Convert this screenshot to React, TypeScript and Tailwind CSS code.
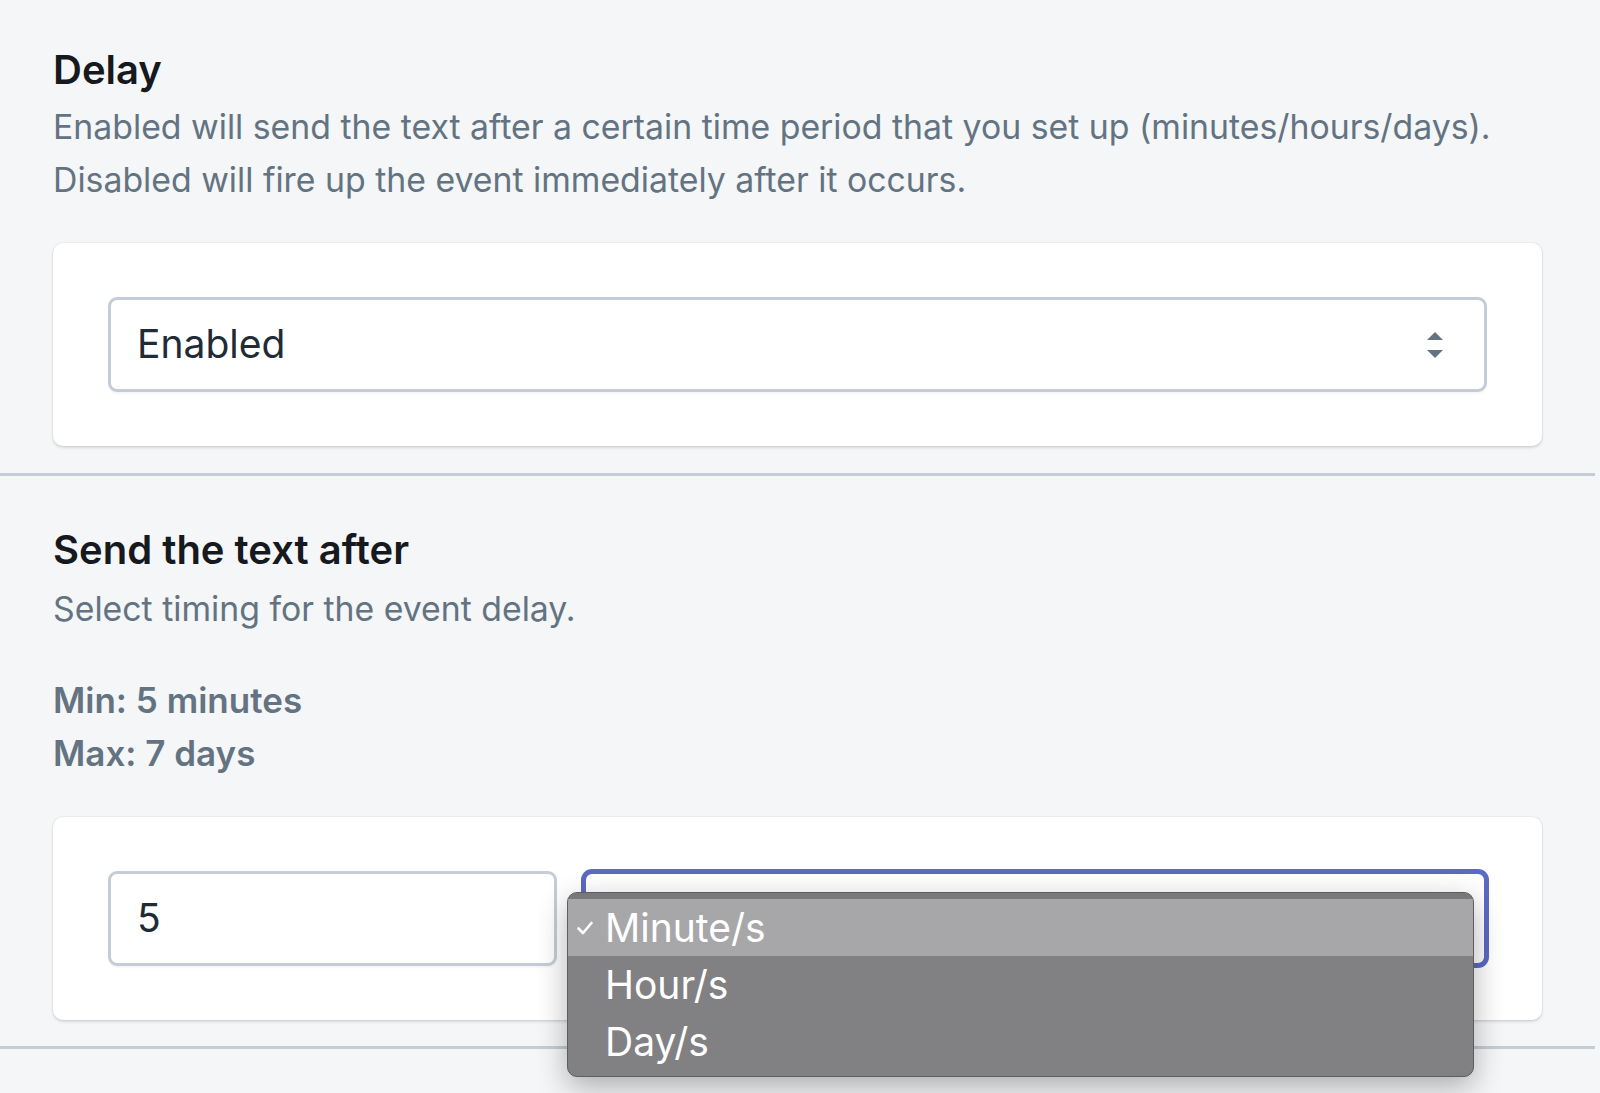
import { useState } from 'react'

const units = ['Minute/s', 'Hour/s', 'Day/s']

const SelectArrows = () => (
  <svg width="18" height="26" viewBox="0 0 18 26" className="shrink-0">
    <path d="M9 0 L17 8 H1 Z" fill="#637381" />
    <path d="M9 26 L17 18 H1 Z" fill="#637381" />
  </svg>
)

const Check = () => (
  <svg width="18" height="16" viewBox="0 0 18 16" className="shrink-0">
    <path d="M2.5 8.5 L7 13 L15.5 3" fill="none" stroke="white" strokeWidth="2.6" strokeLinecap="round" strokeLinejoin="round" />
  </svg>
)

export default function App() {
  const [delay] = useState('Enabled')
  const [amount] = useState('5')
  const [unit] = useState('Minute/s')

  return (
    <div className="min-h-screen overflow-hidden bg-[#f4f6f8] font-['Inter','Liberation_Sans',sans-serif]">
      <section className="pl-[53px] pr-[58px] pt-[46px] pb-[27px]">
        <h2 className="text-[40px] leading-[48px] font-semibold text-[#16191d]">Delay</h2>
        <p className="mt-[6px] text-[33.8px] leading-[53px] text-[#637381]">
          Enabled will send the text after a certain time period that you set up (minutes/hours/days).
          <br />
          Disabled will fire up the event immediately after it occurs.
        </p>
        <div className="mt-[37px] rounded-[10px] bg-white px-[55px] py-[54px] shadow-[0_0_0_1px_rgba(63,63,68,0.05),0_2px_3px_0_rgba(63,63,68,0.15)]">
          <div className="flex h-[95px] items-center justify-between rounded-[9px] border-[3px] border-[#c4cdd5] bg-white pl-[26px] pr-[40px] shadow-[0_2px_2px_rgba(0,0,0,0.04)]">
            <span className="text-[39px] text-[#212b36]">{delay}</span>
            <SelectArrows />
          </div>
        </div>
      </section>

      <div className="h-[3px] w-[1595px] bg-[#c4cdd5]" />

      <section className="pl-[53px] pr-[58px] pt-[50px] pb-[26px]">
        <h2 className="text-[40px] leading-[48px] font-semibold text-[#16191d]">Send the text after</h2>
        <p className="mt-[8px] text-[33.8px] leading-[53px] text-[#637381]">Select timing for the event delay.</p>
        <div className="mt-[39px] text-[35px] leading-[53px] font-semibold text-[#637381]">
          <p>Min: 5 minutes</p>
          <p>Max: 7 days</p>
        </div>
        <div className="mt-[37px] rounded-[10px] bg-white px-[55px] py-[54px] shadow-[0_0_0_1px_rgba(63,63,68,0.05),0_2px_3px_0_rgba(63,63,68,0.15)]">
          <div className="flex gap-[26px]">
            <div className="flex h-[95px] w-[449px] items-center rounded-[9px] border-[3px] border-[#c4cdd5] bg-white pl-[26px] shadow-[0_2px_2px_rgba(0,0,0,0.04)]">
              <span className="text-[39px] text-[#212b36]">{amount}</span>
            </div>
            <div className="relative flex-1">
              <div className="h-[95px] rounded-[9px] border-[3px] border-[#5c6ac4] bg-white shadow-[0_0_0_2px_#5c6ac4]" />
              <div className="absolute left-[-16px] top-[21px] z-10 w-[907px] overflow-hidden rounded-[10px] border border-[#5e5e61] bg-[#818184] shadow-[0_10px_30px_rgba(0,0,0,0.3)]">
                <div className="h-[6px] bg-[#78787b]" />
                {units.map((u) => (
                  <div
                    key={u}
                    className={`flex h-[57px] items-center text-[39px] text-white ${u === unit ? 'bg-[#a7a7a9]' : ''}`}
                  >
                    <div className="flex w-[37px] pl-[8px]">{u === unit && <Check />}</div>
                    <span className="leading-none">{u}</span>
                  </div>
                ))}
                <div className="h-[6px]" />
              </div>
            </div>
          </div>
        </div>
      </section>

      <div className="h-[3px] w-[1595px] bg-[#c4cdd5]" />
    </div>
  )
}
